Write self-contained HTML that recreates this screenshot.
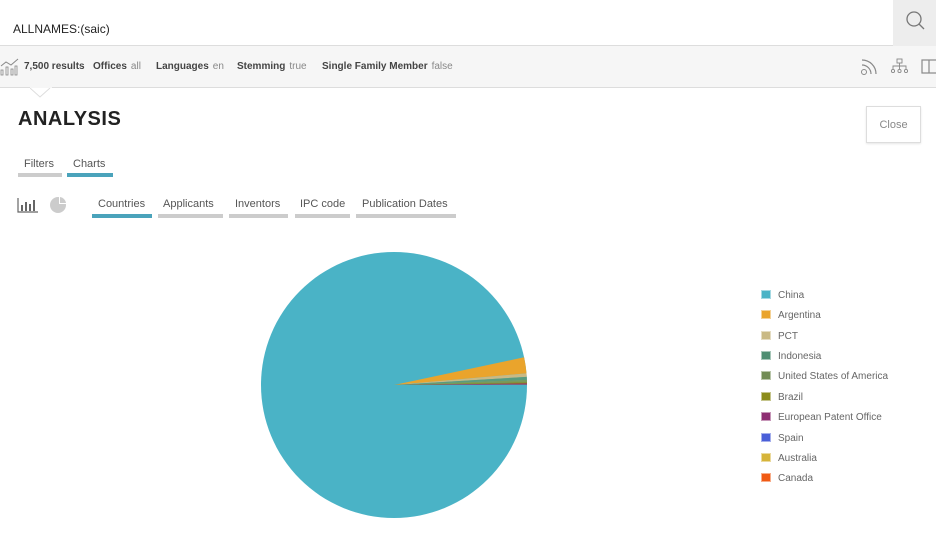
<!DOCTYPE html>
<html><head><meta charset="utf-8"><style>
*{margin:0;padding:0;box-sizing:border-box}
body{width:936px;height:538px;overflow:hidden;background:#fff;font-family:"Liberation Sans",sans-serif;position:relative;color:#333}
.abs{position:absolute}
.search{left:0;top:0;width:936px;height:46px;border-bottom:1px solid #ddd}
.sbtn{left:893px;top:0;width:43px;height:46px;background:#ededed}
.bar{left:0;top:46px;width:936px;height:42px;background:#f6f6f6;border-bottom:1px solid #ddd}
.bar span{position:absolute;top:15px;font-size:10px;color:#444;font-weight:bold;white-space:nowrap}
.bar span i{font-style:normal;font-weight:normal;color:#888;margin-left:4px}
.tab{font-size:11px;color:#555;white-space:nowrap}
.ul{height:4px;background:#ccc}
.leg{left:761px;font-size:10px;color:#666;white-space:nowrap}
.leg b{display:inline-block;width:10px;height:9px;margin-right:7px;vertical-align:-1px;border:1px solid rgba(255,255,255,.5)}
</style></head><body>
<div class="abs search"></div>
<div class="abs" style="left:13px;top:22px;font-size:12px;color:#222">ALLNAMES:(saic)</div>
<div class="abs sbtn"><svg width="43" height="46"><circle cx="21" cy="19" r="7" fill="none" stroke="#777" stroke-width="1.3"/><line x1="26" y1="24" x2="31" y2="29" stroke="#777" stroke-width="1.3"/></svg></div>
<div class="abs bar">
<svg class="abs" style="left:0;top:10px" width="20" height="20"><polyline points="1,10 6,6 11,9 18,3" fill="none" stroke="#888" stroke-width="1"/><rect x="1" y="14" width="2" height="5" fill="none" stroke="#888" stroke-width=".8"/><rect x="6" y="11" width="2" height="8" fill="none" stroke="#888" stroke-width=".8"/><rect x="11" y="13" width="2" height="6" fill="none" stroke="#888" stroke-width=".8"/><rect x="15" y="10" width="2" height="9" fill="none" stroke="#888" stroke-width=".8"/></svg>
<span style="left:24px">7,500 results</span>
<span style="left:93px">Offices<i>all</i></span>
<span style="left:156px">Languages<i>en</i></span>
<span style="left:237px">Stemming<i>true</i></span>
<span style="left:322px">Single Family Member<i>false</i></span>
<svg class="abs" style="left:860px;top:10px" width="76" height="22"><circle cx="4" cy="16" r="2.5" fill="none" stroke="#888"/><path d="M2 9a9 9 0 0 1 9 9M2 4a14 14 0 0 1 14 14" fill="none" stroke="#888" stroke-width="1.2"/><rect x="37" y="3" width="5" height="4" fill="none" stroke="#888" stroke-width=".9"/><path d="M39.5 7v3M33 13v-3h13v3M39.5 10v3" fill="none" stroke="#888" stroke-width=".9"/><circle cx="33" cy="15" r="1.6" fill="none" stroke="#888" stroke-width=".9"/><circle cx="39.5" cy="15" r="1.6" fill="none" stroke="#888" stroke-width=".9"/><circle cx="46" cy="15" r="1.6" fill="none" stroke="#888" stroke-width=".9"/><rect x="62" y="4" width="16" height="13" fill="none" stroke="#888" stroke-width="1.2"/><line x1="69" y1="4" x2="69" y2="17" stroke="#888" stroke-width="1.2"/></svg>
</div>
<svg class="abs" style="left:30px;top:87px" width="22" height="12"><path d="M0 1 L10 10 L20 1" fill="#fff" stroke="#ddd"/><rect x="0" y="-2" width="22" height="3" fill="#f6f6f6"/></svg>
<div class="abs" style="left:18px;top:108px;font-size:20px;font-weight:bold;color:#222;letter-spacing:.5px">ANALYSIS</div>
<div class="abs" style="left:866px;top:106px;width:55px;height:37px;border:1px solid #ddd;box-shadow:0 1px 2px rgba(0,0,0,.1);font-size:11px;color:#888;text-align:center;line-height:37px">Close</div>
<div class="abs tab" style="left:24px;top:158px">Filters</div><div class="abs ul" style="left:18px;top:173px;width:44px"></div>
<div class="abs tab" style="left:73px;top:158px">Charts</div><div class="abs ul" style="left:67px;top:173px;width:46px;background:#4aa3bb"></div>
<svg class="abs" style="left:17px;top:196px" width="52" height="18"><path d="M1 2v14h20" fill="none" stroke="#666" stroke-width="1.2"/><rect x="4" y="9" width="2" height="6" fill="#666"/><rect x="8" y="6" width="2" height="9" fill="#666"/><rect x="12" y="8" width="2" height="7" fill="#666"/><rect x="16" y="4" width="2" height="11" fill="#666"/><circle cx="41" cy="9" r="8" fill="#ccc"/><path d="M42 0v8h8a8 8 0 0 0-8-8z" fill="#fff"/><path d="M43 1v6h6a7 7 0 0 0-6-6z" fill="#ccc"/></svg>
<div class="abs tab" style="left:98px;top:198px">Countries</div><div class="abs ul" style="left:92px;top:214px;width:60px;background:#4aa3bb"></div>
<div class="abs tab" style="left:163px;top:198px">Applicants</div><div class="abs ul" style="left:158px;top:214px;width:65px"></div>
<div class="abs tab" style="left:235px;top:198px">Inventors</div><div class="abs ul" style="left:229px;top:214px;width:59px"></div>
<div class="abs tab" style="left:300px;top:198px">IPC code</div><div class="abs ul" style="left:295px;top:214px;width:55px"></div>
<div class="abs tab" style="left:362px;top:198px">Publication Dates</div><div class="abs ul" style="left:356px;top:214px;width:100px"></div>
<svg class="abs" style="left:0;top:0" width="700" height="538">
<circle cx="394" cy="385" r="133" fill="#4ab3c6"/>
<path d="M394 385L524.1 357.3A133 133 0 0 1 526.5 373.4Z" fill="#eaa42c"/>
<path d="M394 385L526.5 373.4A133 133 0 0 1 526.75 376.9Z" fill="#c9b985"/>
<path d="M394 385L526.75 376.9A133 133 0 0 1 526.9 379.9Z" fill="#5a9b7d"/>
<path d="M394 385L526.9 379.9A133 133 0 0 1 527 382.2Z" fill="#7a9a5a"/>
<path d="M394 385L527 382.2A133 133 0 0 1 527 383.4Z" fill="#8b8b1a"/>
<path d="M394 385L527 383.4A133 133 0 0 1 527 384.6Z" fill="#a0305a"/>
</svg>
<div class="abs leg" style="top:290px"><b style="background:#4ab3c6"></b>China</div>
<div class="abs leg" style="top:310px"><b style="background:#eaa42c"></b>Argentina</div>
<div class="abs leg" style="top:331px"><b style="background:#c9b985"></b>PCT</div>
<div class="abs leg" style="top:351px"><b style="background:#4f8e72"></b>Indonesia</div>
<div class="abs leg" style="top:371px"><b style="background:#728c55"></b>United States of America</div>
<div class="abs leg" style="top:392px"><b style="background:#8b8b1a"></b>Brazil</div>
<div class="abs leg" style="top:412px"><b style="background:#8e2e72"></b>European Patent Office</div>
<div class="abs leg" style="top:433px"><b style="background:#4a5fd8"></b>Spain</div>
<div class="abs leg" style="top:453px"><b style="background:#d6b43a"></b>Australia</div>
<div class="abs leg" style="top:473px"><b style="background:#f05a14"></b>Canada</div>
</body></html>
